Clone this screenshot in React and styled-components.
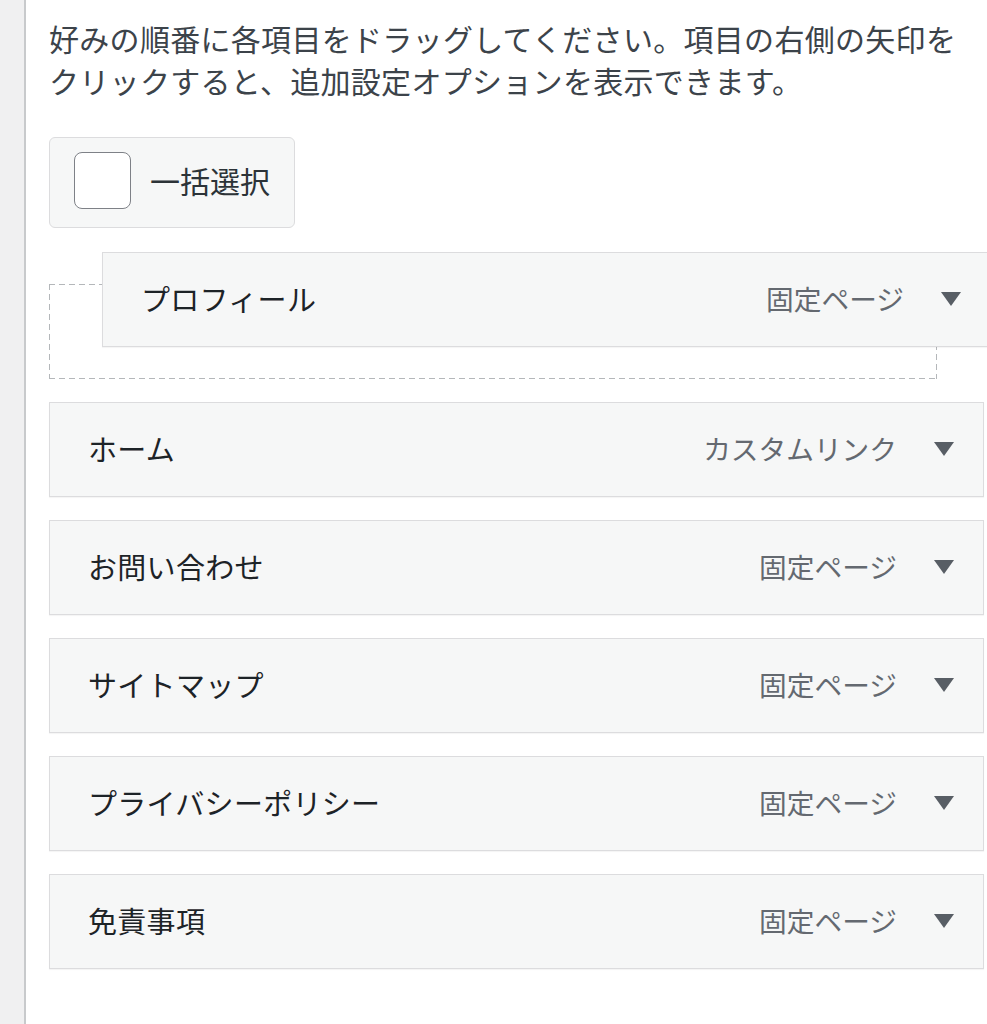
import React from "react";
import styled, { createGlobalStyle } from "styled-components";

const Global = createGlobalStyle`
  html, body { margin: 0; padding: 0; background: #fff; overflow: hidden; }
  body { font-family: "Noto Sans CJK JP", "Noto Sans", sans-serif; }
`;

const Page = styled.div`
  display: flex;
  min-height: 1024px;
  width: 987px;
  overflow: hidden;
`;

const Sidebar = styled.div`
  width: 24px;
  flex: none;
  background: #f0f0f1;
  border-right: 2px solid #c8cacc;
`;

const Main = styled.div`
  flex: 1;
  padding: 17px 0 0 23px;
  min-width: 0;
`;

const Intro = styled.p`
  margin: 0;
  font-size: 30px;
  line-height: 42px;
  letter-spacing: 0.3px;
  color: #3c434a;
  max-width: 920px;
`;

const BulkButton = styled.label`
  margin-top: 36px;
  display: inline-flex;
  align-items: center;
  gap: 19px;
  height: 91px;
  box-sizing: border-box;
  padding: 0 24px 6px 24px;
  background: #f6f7f7;
  border: 1px solid #dcdcde;
  border-radius: 6px;
  font-size: 30px;
  color: #2c3338;
`;

const Check = styled.span`
  width: 57px;
  height: 57px;
  box-sizing: border-box;
  border: 1.5px solid #7e8187;
  border-radius: 8px;
  background: #fff;
  margin-top: 1px;
`;

const List = styled.div`
  margin-top: 56px;
  display: flex;
  flex-direction: column;
  gap: 23px;
  width: 935px;
`;

const dash = (dir) =>
  `repeating-linear-gradient(${dir}, #b4b7ba 0 6px, transparent 6px 10px)`;

const Placeholder = styled.div`
  position: relative;
  height: 95px;
  width: 888px;
  box-sizing: border-box;
  background:
    ${dash("90deg")} top left / 100% 1px no-repeat,
    ${dash("90deg")} bottom left / 100% 1px no-repeat,
    ${dash("180deg")} top left / 1px 100% no-repeat,
    ${dash("180deg")} top right / 1px 100% no-repeat;
`;

const Item = styled.div`
  display: flex;
  align-items: center;
  height: 95px;
  box-sizing: border-box;
  padding: 0 29px 3px 38px;
  background: #f6f7f7;
  border: 1px solid #dcdcde;
  box-shadow: 0 1px 1px rgba(0, 0, 0, 0.04);
  width: 935px;
`;

const Dragged = styled(Item)`
  position: absolute;
  left: 53px;
  top: -32px;
  width: 889px;
`;

const Title = styled.span`
  flex: 1;
  font-size: 29px;
  color: #1d2327;
  letter-spacing: 0.3px;
`;

const Type = styled.span`
  font-size: 27.7px;
  color: #646970;
  margin-right: 37px;
`;

const Arrow = styled.svg`
  width: 20px;
  height: 14px;
  flex: none;
  margin-top: 2px;
`;

function Toggle() {
  return (
    <Arrow viewBox="0 0 20 14">
      <polygon points="0,0 20,0 10,14" fill="#585e65" />
    </Arrow>
  );
}

const items = [
  ["ホーム", "カスタムリンク"],
  ["お問い合わせ", "固定ページ"],
  ["サイトマップ", "固定ページ"],
  ["プライバシーポリシー", "固定ページ"],
  ["免責事項", "固定ページ"],
];

export default function App() {
  return (
    <>
      <Global />
      <Page>
        <Sidebar />
        <Main>
          <Intro>
            好みの順番に各項目をドラッグしてください。項目の右側の矢印をクリックすると、追加設定オプションを表示できます。
          </Intro>
          <BulkButton>
            <Check />
            一括選択
          </BulkButton>
          <List>
            <Placeholder>
              <Dragged>
                <Title>プロフィール</Title>
                <Type>固定ページ</Type>
                <Toggle />
              </Dragged>
            </Placeholder>
            {items.map(([t, k]) => (
              <Item key={t}>
                <Title>{t}</Title>
                <Type>{k}</Type>
                <Toggle />
              </Item>
            ))}
          </List>
        </Main>
      </Page>
    </>
  );
}
